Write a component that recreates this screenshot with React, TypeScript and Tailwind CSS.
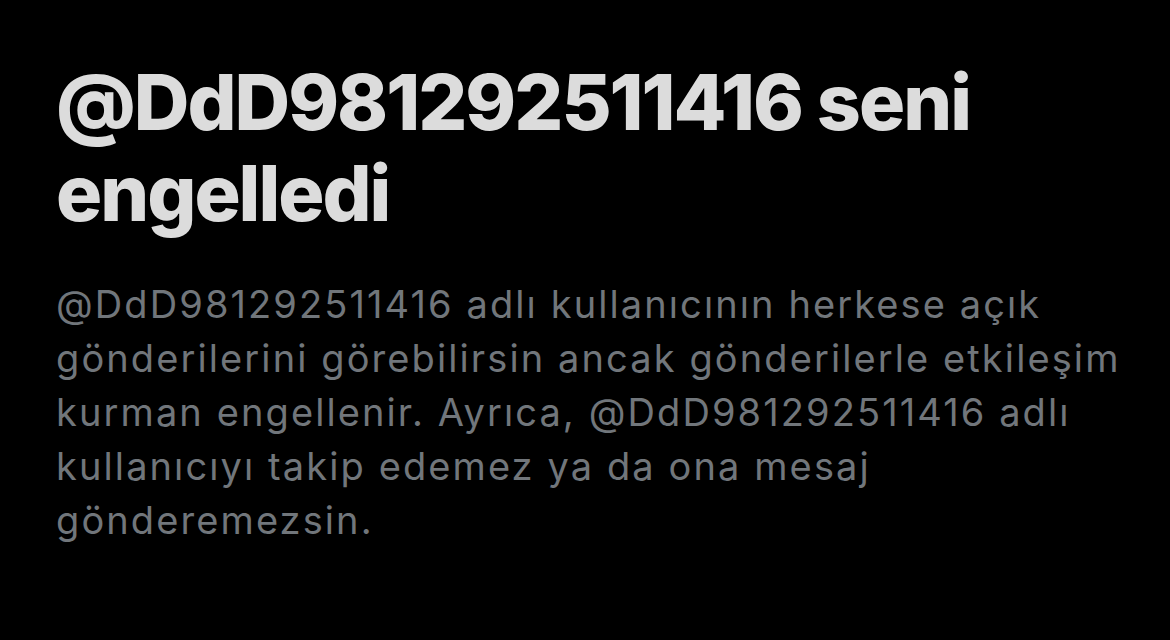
export default function App() {
  return (
    <div className="w-[1170px] h-[640px] bg-black overflow-hidden" style={{ fontFamily: 'Inter, "Noto Sans", sans-serif' }}>
      <div className="pl-[56px] pr-[20px] pt-[57px]">
        <h1 className="text-[77px] leading-[91px] font-extrabold text-[#dcdcdc] tracking-[-2px]">
          @DdD981292511416 seni
          <br />
          engelledi
        </h1>
        <p className="mt-[38px] text-[38px] leading-[54px] font-normal text-[#71767b] tracking-[2.1px] whitespace-nowrap">
          @DdD981292511416 adlı kullanıcının herkese açık
          <br />
          gönderilerini görebilirsin ancak gönderilerle etkileşim
          <br />
          kurman engellenir. Ayrıca, @DdD981292511416 adlı
          <br />
          kullanıcıyı takip edemez ya da ona mesaj
          <br />
          gönderemezsin.
        </p>
      </div>
    </div>
  );
}
